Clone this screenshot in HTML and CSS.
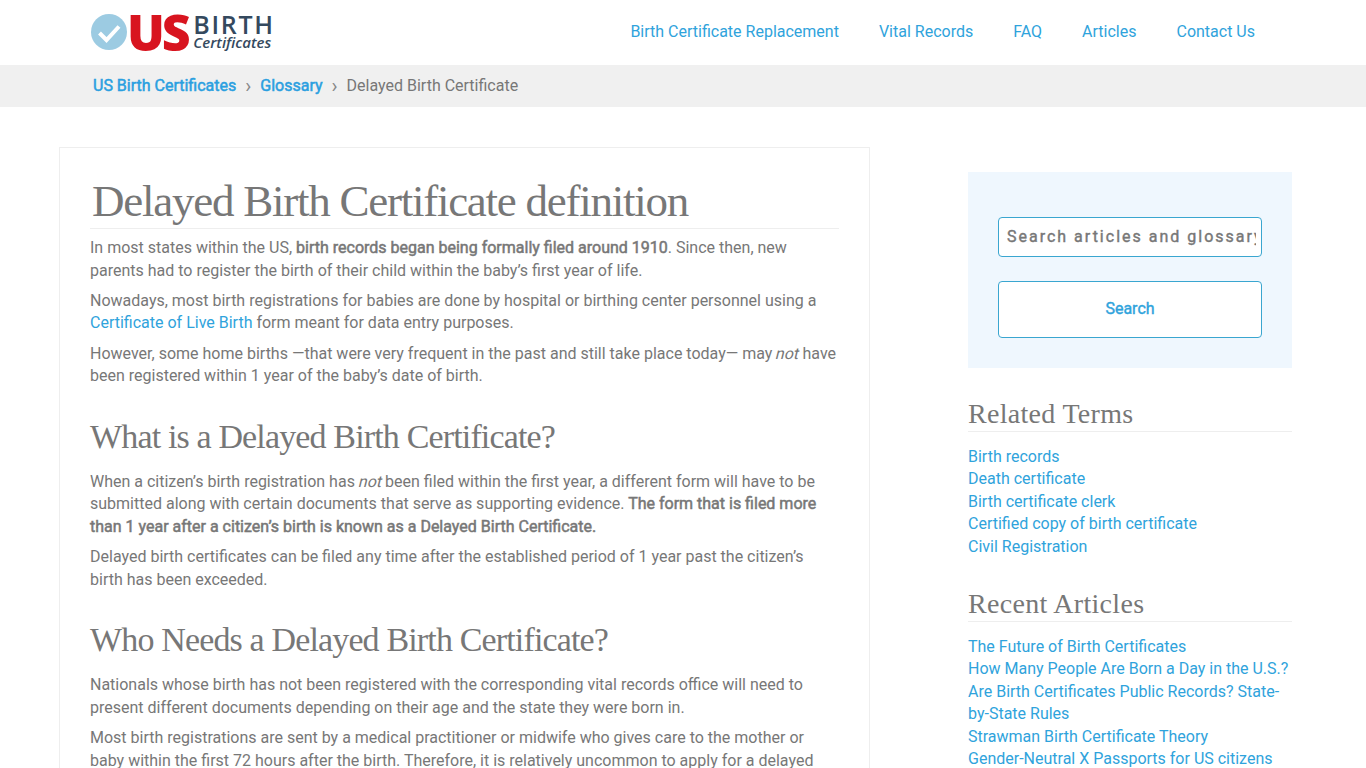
FILE: index.html
```html
<!DOCTYPE html>
<html lang="en">
<head>
    <meta charset="UTF-8">
    <meta name="viewport" content="width=device-width, initial-scale=1.0">
    <title>Delayed Birth Certificate definition</title>
    <link rel="stylesheet" href="styles.css">
</head>
<body>
    <header class="top">
        <a class="logo" href="#">
            <svg class="logo-mark" width="36" height="36" viewBox="0 0 36 36">
                <circle cx="18" cy="18" r="18" fill="#9ccbe2"/>
                <path d="M8.500 19l7 7L28 12.500" fill="none" stroke="#fff" stroke-width="4"/>
            </svg>
            <span class="logo-us">US</span>
            <span class="logo-words">
                <span class="logo-birth">BIRTH</span>
                <span class="logo-cert">Certificates</span>
            </span>
        </a>
        <nav class="nav">
            <a href="#">Birth Certificate Replacement</a>
            <a href="#">Vital Records</a>
            <a href="#">FAQ</a>
            <a href="#">Articles</a>
            <a href="#">Contact Us</a>
        </nav>
    </header>

    <div class="crumbs">
        <a href="#">US Birth Certificates</a>
        <span class="sep">&rsaquo;</span>
        <a href="#">Glossary</a>
        <span class="sep">&rsaquo;</span>
        <span class="here">Delayed Birth Certificate</span>
    </div>

    <div class="wrap">
        <main class="card">
            <h1>Delayed Birth Certificate definition</h1>
            <p>In most states within the US, <b>birth records began being formally filed around 1910</b>. Since then, new parents had to register the birth of their child within the baby’s first year of life.</p>
            <p>Nowadays, most birth registrations for babies are done by hospital or birthing center personnel using a <a href="#">Certificate of Live Birth</a> form meant for data entry purposes.</p>
            <p>However, some home births —that were very frequent in the past and still take place today— may <i>not</i> have been registered within 1 year of the baby’s date of birth.</p>

            <h2>What is a Delayed Birth Certificate?</h2>
            <p>When a citizen’s birth registration has <i>not</i> been filed within the first year, a different form will have to be submitted along with certain documents that serve as supporting evidence. <b>The form that is filed more than 1 year after a citizen’s birth is known as a Delayed Birth Certificate.</b></p>
            <p>Delayed birth certificates can be filed any time after the established period of 1 year past the citizen’s birth has been exceeded.</p>

            <h2>Who Needs a Delayed Birth Certificate?</h2>
            <p>Nationals whose birth has not been registered with the corresponding vital records office will need to present different documents depending on their age and the state they were born in.</p>
            <p>Most birth registrations are sent by a medical practitioner or midwife who gives care to the mother or baby within the first 72 hours after the birth. Therefore, it is relatively uncommon to apply for a delayed</p>
        </main>

        <aside class="side">
            <form class="search">
                <input type="text" placeholder="Search articles and glossary">
                <button type="button">Search</button>
            </form>

            <h3>Related Terms</h3>
            <ul>
                <li><a href="#">Birth records</a></li>
                <li><a href="#">Death certificate</a></li>
                <li><a href="#">Birth certificate clerk</a></li>
                <li><a href="#">Certified copy of birth certificate</a></li>
                <li><a href="#">Civil Registration</a></li>
            </ul>

            <h3>Recent Articles</h3>
            <ul>
                <li><a href="#">The Future of Birth Certificates</a></li>
                <li><a href="#">How Many People Are Born a Day in the U.S.?</a></li>
                <li><a href="#">Are Birth Certificates Public Records? State-by-State Rules</a></li>
                <li><a href="#">Strawman Birth Certificate Theory</a></li>
                <li><a href="#">Gender-Neutral X Passports for US citizens</a></li>
            </ul>
        </aside>
    </div>
</body>
</html>
```

FILE: styles.css
```css
*{
    margin: 0;
    padding: 0;
    box-sizing: border-box;
}

html, body{
    height: 768px;
    overflow: hidden;
}

body{
    font: 16px/22.4px Roboto, sans-serif;
    color: #777;
    background: #fff;
}

a{
    color: #2fa3dc;
    text-decoration: none;
}

ul{
    list-style: none;
}

b{
    font-weight: 400;
    -webkit-text-stroke: 0.5px #777;
}

i{
    display: inline-block;
    margin-right: -1px;
    font-style: normal;
    transform: skewX(-14deg);
}

.top{
    height: 65px;
    padding: 0 111px 1px 91px;
    display: flex;
    align-items: center;
    justify-content: space-between;
}

.logo{
    display: flex;
    align-items: center;
}

.logo-us{
    font: 800 50px/47px "Open Sans", sans-serif;
    letter-spacing: -3.200px;
    color: #d8141f;
}

.logo-words{
    margin-left: 6px;
    padding-bottom: 2px;
    display: flex;
    flex-direction: column;
}

.logo-birth{
    font: 600 25px/23px "Open Sans", sans-serif;
    letter-spacing: 1.7px;
    color: #34495e;
}

.logo-cert{
    margin-top: -2px;
    font: italic 600 15px/16px "Open Sans", sans-serif;
    color: #34495e;
}

.nav{
    display: flex;
    gap: 40px;
}

.crumbs{
    height: 42px;
    padding-left: 93px;
    display: flex;
    align-items: center;
    gap: 9px;
    background: #f0f0f0;
}

.crumbs a{
    color: #2a9fe0;
    -webkit-text-stroke: 0.5px #2a9fe0;
}

.crumbs .sep{
    width: 6px;
    font-size: 20px;
    color: #888;
}

.wrap{
    padding: 40px 74px 0 59px;
    display: flex;
    justify-content: space-between;
    align-items: flex-start;
}

.card{
    width: 811px;
    padding: 26px 30px 30px;
    border: 1px solid #eee;
}

.card p{
    margin-bottom: 8px;
}

h1, h2, h3{
    font-family: "Liberation Serif", serif;
    font-weight: 400;
}

h1{
    padding-left: 2px;
    margin-bottom: 8.200px;
    font-size: 45px;
    line-height: 54px;
    letter-spacing: -1.25px;
    border-bottom: 1px solid #eee;
}

h2{
    margin: 29px 0 14.400px;
    font-size: 34px;
    line-height: 40px;
    letter-spacing: -0.85px;
}

.side{
    width: 324px;
    margin-top: 25px;
}

.search{
    height: 196px;
    padding: 45px 30px 0;
    background: #eff7fe;
}

.search input,
.search button{
    display: block;
    width: 100%;
    background: #fff;
    border: 1px solid #3aa6d0;
    border-radius: 4px;
    font-family: Roboto, sans-serif;
}

.search input{
    height: 40px;
    padding: 0 5px 2px 8px;
    font-size: 16px;
    letter-spacing: 2px;
    -webkit-text-stroke: 0.4px #777;
    outline: none;
}

.search input::placeholder{
    color: #777;
    opacity: 1;
}

.search button{
    height: 57px;
    margin-top: 24px;
    padding-bottom: 2px;
    font-size: 16px;
    color: #2fa3dc;
    -webkit-text-stroke: 0.4px #2fa3dc;
}

h3{
    margin-top: 31px;
    padding-bottom: 2px;
    margin-bottom: 14px;
    font-size: 28px;
    line-height: 30px;
    letter-spacing: 0.3px;
    border-bottom: 1px solid #eee;
}

h3 + ul{
    margin-bottom: 0.200px;
}
```
